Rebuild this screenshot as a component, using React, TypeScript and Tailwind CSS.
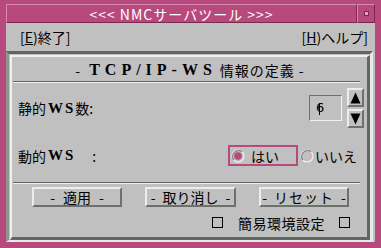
import React from 'react';

const jp = "font-['Noto_Sans_CJK_JP',sans-serif]";
const serif = "font-['Liberation_Serif','Noto_Sans_CJK_JP',serif] font-bold";

function Raised({ className = '', children }: { className?: string; children?: React.ReactNode }) {
    return (
        <div className={`border-t-2 border-l-2 border-t-[#ededed] border-l-[#ededed] border-b-2 border-r-2 border-b-[#6b716b] border-r-[#6b716b] bg-[#c0c0c0] flex items-center justify-center ${className}`}>
            {children}
        </div>
    );
}

function Radio({ on }: { on?: boolean }) {
    return (
        <svg width="14" height="14" viewBox="0 0 14 14">
            <circle cx="7" cy="7" r="6" fill="#c0c0c0" stroke="#f0f0f0" strokeWidth="1.2" />
            <path d="M2.8 11.2 A6 6 0 0 1 11.2 2.8" fill="none" stroke="#7a7f7a" strokeWidth="1.2" />
            {on && <circle cx="7" cy="7" r="3.8" fill="#b8497c" />}
        </svg>
    );
}

function Separator() {
    return <div className="ml-[1px] mr-[7px] h-[2px] border-t border-t-[#5f675f] border-b border-b-[#f0f0f0]" />;
}

export default function App() {
    return (
        <div className={`w-[381px] h-[248px] bg-[#b8497c] pt-[4px] px-[6px] pb-[6px] text-black ${jp}`}>
            <div className="h-full flex flex-col bg-[#c0c0c0]">
                {/* title bar */}
                <div className="h-[19px] flex bg-[#b8497c]">
                    <div className="flex-1 flex items-center justify-center border border-[#d98aae] border-b-[#7a2a52] border-r-[#7a2a52] text-white text-[14px] leading-none tracking-[1px]">
                        &lt;&lt;&lt; NMCサーバツール &gt;&gt;&gt;
                    </div>
                    <div className="w-[18px] flex items-center justify-center border border-[#d98aae] border-b-[#7a2a52] border-r-[#7a2a52]">
                        <div className="w-[5px] h-[5px] bg-[#e6a0c0] border border-[#7a2a52]" />
                    </div>
                </div>

                {/* menu bar */}
                <div className="h-[28px] flex items-center justify-between pl-[14px] pr-[7px] text-[14px] leading-none">
                    <span>[<span className="underline">E</span>)終了]</span>
                    <span>[<span className="underline">H</span>)ヘルプ]</span>
                </div>

                {/* main */}
                <div className="flex-1 flex flex-col mr-[2px] pl-[1px] pt-[1px] border-t-[3px] border-l-[3px] border-t-[#5f675f] border-l-[#8f948f] border-b-2 border-r-[3px] border-b-[#e8e8e8] border-r-[#e8e8e8]">
                    <div className="flex-1 flex flex-col border-t-2 border-l-2 border-t-[#f0f0f0] border-l-[#f0f0f0] border-b-[3px] border-r-[3px] border-b-[#5f675f] border-r-[#5f675f]">
                        <div className="h-[24px] flex items-center justify-center pt-[2px] text-[14px] leading-none">
                            <span className="mr-[9px]">-</span>
                            <span className={`${serif} text-[16px] tracking-[5px]`}>TCP/IP-WS</span>
                            <span className="ml-[3px] tracking-[1px]">情報の定義</span>
                            <span className="ml-[4px]">-</span>
                        </div>
                        <Separator />

                        {/* static WS row */}
                        <div className="mt-[5px] h-[40px] flex items-center pl-[6px] pr-[3px]">
                            <span className="text-[14px] leading-none flex items-center">
                                静的<span className={`${serif} text-[15px] tracking-[2px] ml-[2px]`}>WS</span>数:
                            </span>
                            <div className="ml-auto w-[33px] h-[26px] border-t border-l border-t-[#6b716b] border-l-[#6b716b] border-b border-r border-b-[#f0f0f0] border-r-[#f0f0f0] flex items-center pl-[6px] text-[13px] relative">
                                <span className="font-['DejaVu_Sans',sans-serif]">6</span>
                                <span className="absolute left-[9px] top-[7px] w-[1px] h-[12px] bg-black" />
                            </div>
                            <div className="ml-[5px] flex flex-col gap-[2px]">
                                <Raised className="w-[17px] h-[19px]">
                                    <svg width="11" height="12" viewBox="0 0 11 12">
                                        <path d="M5.5 0.5 L10.5 11.5 L0.5 11.5 Z" fill="#000" />
                                    </svg>
                                </Raised>
                                <Raised className="w-[17px] h-[19px]">
                                    <svg width="11" height="12" viewBox="0 0 11 12">
                                        <path d="M0.5 0.5 L10.5 0.5 L5.5 11.5 Z" fill="#000" />
                                    </svg>
                                </Raised>
                            </div>
                        </div>

                        {/* dynamic WS row */}
                        <div className="mt-[17px] h-[21px] flex items-center pl-[6px] pr-[10px]">
                            <span className="text-[14px] leading-none flex items-center">
                                動的<span className={`${serif} text-[15px] tracking-[2px] ml-[2px]`}>WS</span>
                                <span className="ml-[17px]">:</span>
                            </span>
                            <div className="ml-auto w-[70px] h-[21px] border-2 border-[#b8497c] flex items-center pl-[1px] gap-[6px] text-[14px] leading-none">
                                <Radio on />
                                <span>はい</span>
                            </div>
                            <div className="ml-[2px] flex items-center gap-[1px] text-[14px] leading-none">
                                <Radio />
                                <span>いいえ</span>
                            </div>
                        </div>

                        <div className="mt-[16px]">
                            <Separator />
                        </div>

                        {/* buttons */}
                        <div className="mt-[3px] flex pl-[20px] gap-[23px] text-[14px] leading-none">
                            <Raised className="w-[90px] h-[20px] gap-[8px]">
                                <span>-</span><span>適用</span><span>-</span>
                            </Raised>
                            <Raised className="w-[91px] h-[20px] gap-[7px]">
                                <span>-</span><span>取り消し</span><span>-</span>
                            </Raised>
                            <Raised className="w-[90px] h-[20px] gap-[7px]">
                                <span>-</span><span className="tracking-[1px]">リセット</span><span>-</span>
                            </Raised>
                        </div>

                        {/* checkbox row */}
                        <div className="mt-[10px] h-[11px] flex items-center pl-[200px] text-[14px] leading-none">
                            <div className="w-[11px] h-[11px] border-[1.5px] border-black" />
                            <span className="ml-[15px] tracking-[0.5px]">簡易環境設定</span>
                            <div className="ml-[14px] w-[11px] h-[11px] border-[1.5px] border-black" />
                        </div>
                    </div>
                </div>
            </div>
        </div>
    );
}
